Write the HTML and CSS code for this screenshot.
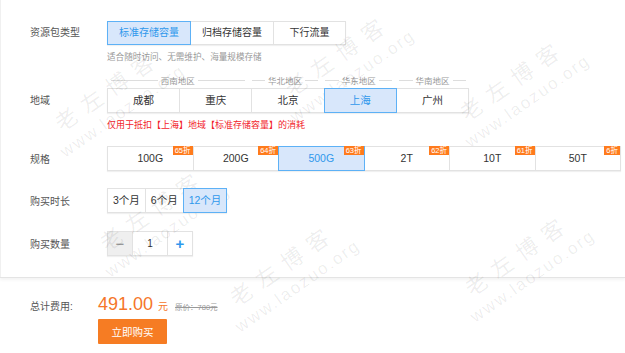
FILE: index.html
```html
<!DOCTYPE html>
<html>
	<head>
		<meta charset="UTF-8">
		<title>购买资源包</title>
		<link rel="stylesheet" href="styles.css">
	</head>
	<body>
		<div class="page">
			<!-- options -->
			<div class="config">
				<div class="row">
					<span class="label label-top">资源包类型</span>
					<div class="content">
						<div class="group">
							<span class="opt opt-type active">标准存储容量</span>
							<span class="opt opt-type">归档存储容量</span>
							<span class="opt opt-type">下行流量</span>
						</div>
						<p class="hint">适合随时访问、无需维护、海量规模存储</p>
					</div>
				</div>

				<div class="row row-region">
					<span class="label label-bottom">地域</span>
					<div class="content">
						<div class="areas">
							<span class="area area-wide">西南地区</span>
							<span class="area">华北地区</span>
							<span class="area">华东地区</span>
							<span class="area">华南地区</span>
						</div>
						<div class="group regions">
							<span class="opt">成都</span>
							<span class="opt">重庆</span>
							<span class="opt">北京</span>
							<span class="opt active">上海</span>
							<span class="opt">广州</span>
						</div>
					</div>
				</div>
				<p class="note">仅用于抵扣【上海】地域【标准存储容量】的消耗</p>

				<div class="row row-spec">
					<span class="label">规格</span>
					<div class="group specs">
						<span class="opt">100G<i class="badge">65折</i></span>
						<span class="opt">200G<i class="badge">64折</i></span>
						<span class="opt active">500G<i class="badge">63折</i></span>
						<span class="opt">2T<i class="badge">62折</i></span>
						<span class="opt">10T<i class="badge">61折</i></span>
						<span class="opt">50T<i class="badge">6折</i></span>
					</div>
				</div>

				<div class="row row-time">
					<span class="label">购买时长</span>
					<div class="group">
						<span class="opt opt-time">3个月</span>
						<span class="opt opt-time">6个月</span>
						<span class="opt opt-time active">12个月</span>
					</div>
				</div>

				<div class="row row-count">
					<span class="label">购买数量</span>
					<div class="group counter">
						<span class="opt step minus">&minus;</span>
						<span class="opt num">1</span>
						<span class="opt step plus">+</span>
					</div>
				</div>
			</div>

			<!-- total -->
			<div class="summary">
				<span class="label sum-label">总计费用:</span>
				<div class="price">
					<span class="amount">491.00</span>
					<span class="unit">元</span>
					<del class="origin">原价：780元</del>
				</div>
				<button class="buy">立即购买</button>
			</div>

			<!-- watermark -->
			<div class="mark" style="left: 270px; top: 40px;"><b>老左博客</b><span>www.laozuo.org</span></div>
			<div class="mark" style="left: 445px; top: 65px;"><b>老左博客</b><span>www.laozuo.org</span></div>
			<div class="mark" style="left: 40px; top: 75px;"><b>老左博客</b><span>www.laozuo.org</span></div>
			<div class="mark" style="left: 85px; top: 195px;"><b>老左博客</b><span>www.laozuo.org</span></div>
			<div class="mark" style="left: 215px; top: 250px;"><b>老左博客</b><span>www.laozuo.org</span></div>
			<div class="mark" style="left: 450px; top: 240px;"><b>老左博客</b><span>www.laozuo.org</span></div>
		</div>
	</body>
</html>
```

FILE: styles.css
```css
html, body {
	margin: 0;
	background-color: white;
}
body {
	font-family: "Liberation Sans", "Noto Sans CJK SC", sans-serif;
	color: #333;
}
.page {
	position: relative;
	width: 625px;
	height: 353px;
	overflow: hidden;
}
.config {
	padding: 21px 0 21px 30px;
	border-bottom: 1px solid #e4e4e4;
	box-shadow: 0 2px 3px rgba(0, 0, 0, 0.05), inset 1px 0 0 #f0f0f0;
}
.row {
	display: flex;
	align-items: center;
}
.label {
	width: 77px;
	flex-shrink: 0;
	font-size: 10px;
	color: #555;
}
.label-top {
	align-self: flex-start;
	line-height: 24px;
}
.label-bottom {
	align-self: flex-end;
	line-height: 25px;
}
.content {
	display: flex;
	flex-direction: column;
	align-items: flex-start;
}
.group {
	display: flex;
	box-shadow: 0 1px 1px rgba(0, 0, 0, 0.06);
}
.opt {
	position: relative;
	box-sizing: border-box;
	height: 25px;
	line-height: 23px;
	padding: 0 6px;
	border: 1px solid #e2e2e2;
	margin-left: -1px;
	background-color: white;
	font-size: 10.5px;
	color: #333;
	text-align: center;
}
.opt:first-child {
	margin-left: 0;
}
.opt.active {
	z-index: 1;
	background-color: #d8e7fb;
	border-color: #5db1f6;
	color: #2f98ec;
}
.opt-type {
	height: 24px;
	line-height: 22px;
	min-width: 73px;
	padding: 0 11px;
	font-size: 10px;
}
.hint {
	margin: 6px 0 0;
	line-height: 12px;
	font-size: 8.6px;
	color: #999;
}

/* region */
.row-region {
	margin-top: 11px;
}
.areas {
	display: flex;
	width: 362px;
	height: 13px;
}
.area {
	flex: 1;
	display: flex;
	align-items: center;
	gap: 3px;
	margin: 0 3px 0 4px;
	font-size: 8.5px;
	line-height: 12px;
	color: #999;
}
.area-wide {
	flex: 2;
}
.area::before, .area::after {
	content: "";
	flex: 1;
	border-top: 1px solid #ddd;
}
.regions {
	margin-top: 1px;
	width: 362px;
}
.regions .opt {
	flex: 1;
}
.note {
	margin: 6px 0 0 77px;
	line-height: 12px;
	font-size: 9px;
	color: #f2232b;
}

/* spec */
.row-spec {
	margin-top: 15px;
}
.specs {
	width: 514px;
}
.specs .opt {
	flex: 1;
}
.badge {
	position: absolute;
	top: -1px;
	right: 0;
	padding: 0 2px;
	height: 9px;
	line-height: 9px;
	font-size: 7.5px;
	font-style: normal;
	color: white;
	background-color: #ff7b1c;
}

.row-time {
	margin-top: 17px;
}
.opt-time {
	padding: 0 5px;
}
.row-count {
	margin-top: 18px;
}
.counter .step {
	width: 26px;
	padding: 0;
	font-size: 15px;
}
.counter .minus {
	background-color: #efefef;
	color: #888;
}
.counter .plus {
	color: #2f98ec;
	font-weight: bold;
}
.counter .num {
	width: 36px;
	font-size: 10px;
}

/* total */
.summary {
	display: grid;
	grid-template-columns: 68px auto;
	justify-items: start;
	align-items: baseline;
	padding: 16px 0 0 30px;
}
.sum-label {
	width: auto;
	font-size: 10px;
}
.price {
	display: flex;
	align-items: baseline;
	gap: 5px;
	line-height: 20px;
}
.amount {
	font-size: 18px;
	color: #f5762a;
}
.unit {
	font-size: 10px;
	color: #f5762a;
}
.origin {
	margin-left: 2px;
	font-size: 7.5px;
	color: #999;
}
.buy {
	grid-column: 2;
	margin-top: 1px;
	width: 69px;
	height: 25px;
	border: none;
	border-radius: 1px;
	background-color: #f67c23;
	color: white;
	font-family: inherit;
	font-size: 10.5px;
}

/* watermark */
.mark {
	position: absolute;
	display: flex;
	flex-direction: column;
	align-items: center;
	width: 150px;
	transform: rotate(-35deg);
	color: rgba(0, 0, 0, 0.075);
	pointer-events: none;
}
.mark b {
	font-weight: normal;
	font-size: 22px;
	letter-spacing: 9px;
	line-height: 28px;
}
.mark span {
	font-size: 17px;
	letter-spacing: 2px;
	line-height: 22px;
}
```
